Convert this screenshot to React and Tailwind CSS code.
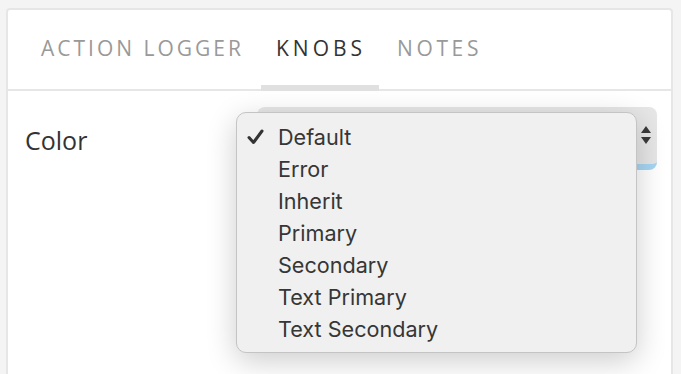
import React from 'react';

const tabs = [
  { label: 'Action Logger', cls: 'pl-[16px] pr-[17px] tracking-[3px] text-[#999] border-transparent' },
  { label: 'Knobs', cls: 'pl-[15px] pr-[13px] tracking-[4px] text-[#333] border-[#e0e0e0]' },
  { label: 'Notes', cls: 'pl-[18px] pr-[16px] tracking-[3.6px] text-[#999] border-transparent' },
];
const options = ['Default', 'Error', 'Inherit', 'Primary', 'Secondary', 'Text Primary', 'Text Secondary'];

export default function App() {
  return (
    <div className="w-[681px] h-[374px] bg-[#f4f4f4] pt-[8px] pl-[6px] pr-[8px] overflow-hidden">
      <div className="relative h-full bg-white border-l-2 border-t-2 border-r-2 border-[#e6e6e6] rounded-t-[4px]">
        {/* tab bar */}
        <div className="flex h-[81px] pl-[17px] border-b-2 border-[#e6e6e6] font-['Open_Sans',sans-serif]">
          {tabs.map((t) => (
            <div
              key={t.label}
              className={'flex items-center pt-[2px] uppercase text-[21px] border-b-[6px] -mb-[2px] ' + t.cls}
            >
              {t.label}
            </div>
          ))}
        </div>

        {/* knob row */}
        <div className="flex items-start pt-[16px] pl-[17px] pr-[14px]">
          <div className="w-[232px] pt-[15px] text-[25px] text-[#333] font-['Open_Sans',sans-serif]">Color</div>
          <div className="flex-1 h-[63px] rounded-[8px] bg-[#e6e6e6] border-b-[6px] border-[#a6d6f3] flex items-center justify-end pr-[5px]">
            <svg width="12" height="20" viewBox="0 0 12 20" className="mb-[2px]">
              <path d="M6 1 L11 8 L1 8 Z" fill="#3a3a3a" />
              <path d="M1 12 L11 12 L6 19 Z" fill="#3a3a3a" />
            </svg>
          </div>
        </div>

        {/* native select popup */}
        <div className="absolute left-[228px] top-[102px] w-[401px] h-[241px] rounded-[10px] border border-[#c4c4c4] bg-[#f0f0f0] shadow-[0_8px_30px_rgba(0,0,0,0.2)] pt-[8px] font-['Inter',sans-serif] text-[21.6px] text-[#363636]">
          {options.map((o, i) => (
            <div key={o} className="flex items-center h-[32px]">
              <div className="w-[41px] flex justify-start pl-[10px]">
                {i === 0 && (
                  <svg width="17" height="16" viewBox="0 0 17 16">
                    <path d="M2 8.5 L6.5 13.5 L15 2" fill="none" stroke="#333" strokeWidth="3" strokeLinecap="round" strokeLinejoin="round" />
                  </svg>
                )}
              </div>
              <span>{o}</span>
            </div>
          ))}
        </div>
      </div>
    </div>
  );
}
